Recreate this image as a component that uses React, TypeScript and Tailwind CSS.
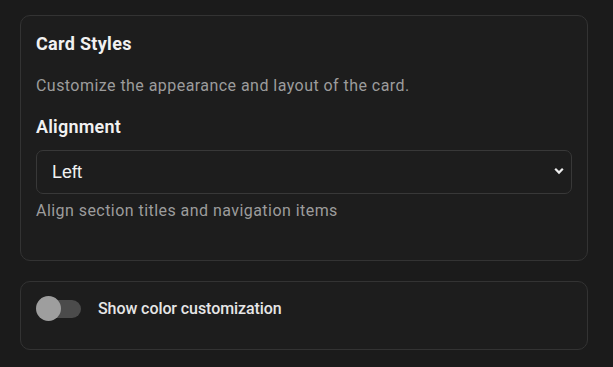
import React, { useState } from 'react';

const App = () => {
  const [align, setAlign] = useState('left');
  const [showColors, setShowColors] = useState(false);

  return (
    <div className="min-h-screen bg-[#1b1b1b] px-5 pt-[15px] font-['Roboto',sans-serif]">
      <div className="flex w-[568px] flex-col gap-[20px]">
        {/* Card styles */}
        <section className="rounded-[10px] border border-[#333333] bg-[#1d1d1d] px-[15px] pt-[16px] pb-[37px]">
          <h2 className="text-[18px] font-bold leading-6 tracking-[0.3px] text-[#f1f1f1]">Card Styles</h2>
          <p className="mt-[18px] text-[16px] leading-6 tracking-[0.45px] text-[#9c9c9c]">
            Customize the appearance and layout of the card.
          </p>
          <h3 className="mt-[17px] text-[18px] font-semibold leading-6 tracking-[0.2px] text-[#f1f1f1]">Alignment</h3>
          <div className="relative mt-[11px]">
            <select
              value={align}
              onChange={(e) => setAlign(e.target.value)}
              className="h-[44px] w-full appearance-none rounded-[7px] border border-[#383838] bg-[#1d1d1d] pl-[15px] font-['Liberation_Sans',sans-serif] text-[18px] text-[#f1f1f1] outline-none"
            >
              <option value="left">Left</option>
              <option value="center">Center</option>
              <option value="right">Right</option>
            </select>
            <svg
              className="pointer-events-none absolute right-[8px] top-[17px]"
              width="10"
              height="8"
              viewBox="0 0 10 8"
              fill="none"
            >
              <path d="M1.2 1.8 5 5.6l3.8-3.8" stroke="#ededed" strokeWidth="2.2" />
            </svg>
          </div>
          <p className="mt-[5px] text-[16px] leading-6 tracking-[0.45px] text-[#9c9c9c]">
            Align section titles and navigation items
          </p>
        </section>

        {/* Color toggle */}
        <section className="h-[69px] rounded-[10px] border border-[#333333] bg-[#1d1d1d] px-[15px] pt-[14px]">
          <label className="flex cursor-pointer items-center gap-[17px]">
            <button
              type="button"
              onClick={() => setShowColors(!showColors)}
              className="relative flex h-[25px] w-[45px] items-center"
            >
              <span className="ml-[2px] h-[18px] w-[43px] rounded-full bg-[#4b4b4b]" />
              <span
                className={
                  showColors
                    ? 'absolute left-[20px] top-0 h-[25px] w-[25px] rounded-full bg-[#e0e0e0]'
                    : 'absolute left-0 top-0 h-[25px] w-[25px] rounded-full bg-[#9e9e9e]'
                }
              />
            </button>
            <span className="text-[16px] font-medium tracking-[-0.08px] text-[#e6e6e6]">Show color customization</span>
          </label>
        </section>
      </div>
    </div>
  );
};

export default App;
